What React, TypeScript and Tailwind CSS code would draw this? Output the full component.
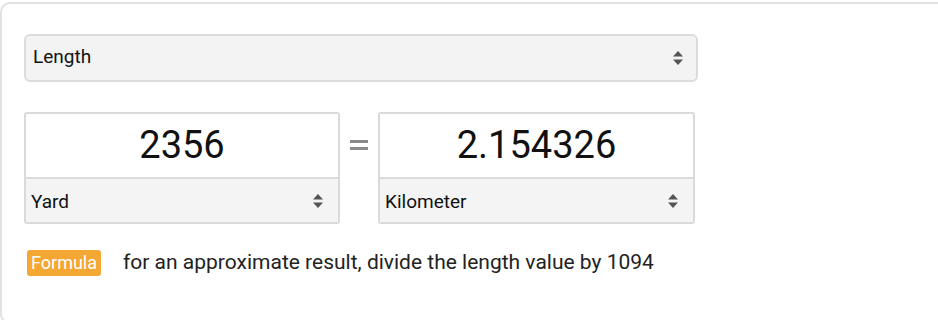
import React, { useState } from 'react';

const Arrows: React.FC = () => (
    <svg width="12" height="18" viewBox="0 0 12 18" className="shrink-0">
        <path d="M6 2 L11 7.5 H1 Z" fill="#555" />
        <path d="M6 16 L11 10.5 H1 Z" fill="#555" />
    </svg>
);

const UnitBox: React.FC<{ value: string; unit: string; width: string }> = ({ value, unit, width }) => (
    <div className={`${width} flex flex-col border-2 border-[#dadada] rounded-[3px] overflow-hidden`}>
        <div className="h-[63px] flex items-center justify-center bg-white text-[38px] text-[#111] leading-none pb-[2px]">
            {value}
        </div>
        <div className="h-[45px] flex items-center justify-between border-t-2 border-[#dadada] bg-[#f4f4f4] pl-[5px] pr-[14px] text-[19px] text-[#111]">
            <span className="mt-[3px]">{unit}</span>
            <Arrows />
        </div>
    </div>
);

const App: React.FC = () => {
    const [category] = useState('Length');

    return (
        <div className="w-[938px] h-[320px] overflow-hidden bg-white font-['Roboto',sans-serif]">
            <div className="mt-[2px] w-[980px] h-[322px] border-2 border-[#e2e2e2] rounded-[10px] pt-[30px] pl-[22px]">
                <div className="w-[674px] h-[48px] flex items-center justify-between border-2 border-[#dcdcdc] rounded-[6px] bg-[#f3f3f3] pl-[7px] pr-[12px] text-[19px] text-[#111]">
                    <span className="-mt-[2px]">{category}</span>
                    <Arrows />
                </div>

                <div className="mt-[30px] flex items-start">
                    <UnitBox value="2356" unit="Yard" width="w-[316px]" />
                    <div className="w-[38px] h-[65px] flex items-center justify-center">
                        <svg width="18" height="10" viewBox="0 0 18 10">
                            <rect x="0" y="0" width="18" height="3" fill="#8a8a8a" />
                            <rect x="0" y="7" width="18" height="3" fill="#8a8a8a" />
                        </svg>
                    </div>
                    <UnitBox value="2.154326" unit="Kilometer" width="w-[317px]" />
                </div>

                <div className="mt-[23px] flex items-center pl-[3px]">
                    <span className="h-[26px] px-[4px] flex items-center rounded-[3px] bg-[#f5a733] text-white text-[18px]">
                        Formula
                    </span>
                    <span className="ml-[22px] text-[21px] text-[#222]">
                        for an approximate result, divide the length value by 1094
                    </span>
                </div>
            </div>
        </div>
    );
};

export default App;
